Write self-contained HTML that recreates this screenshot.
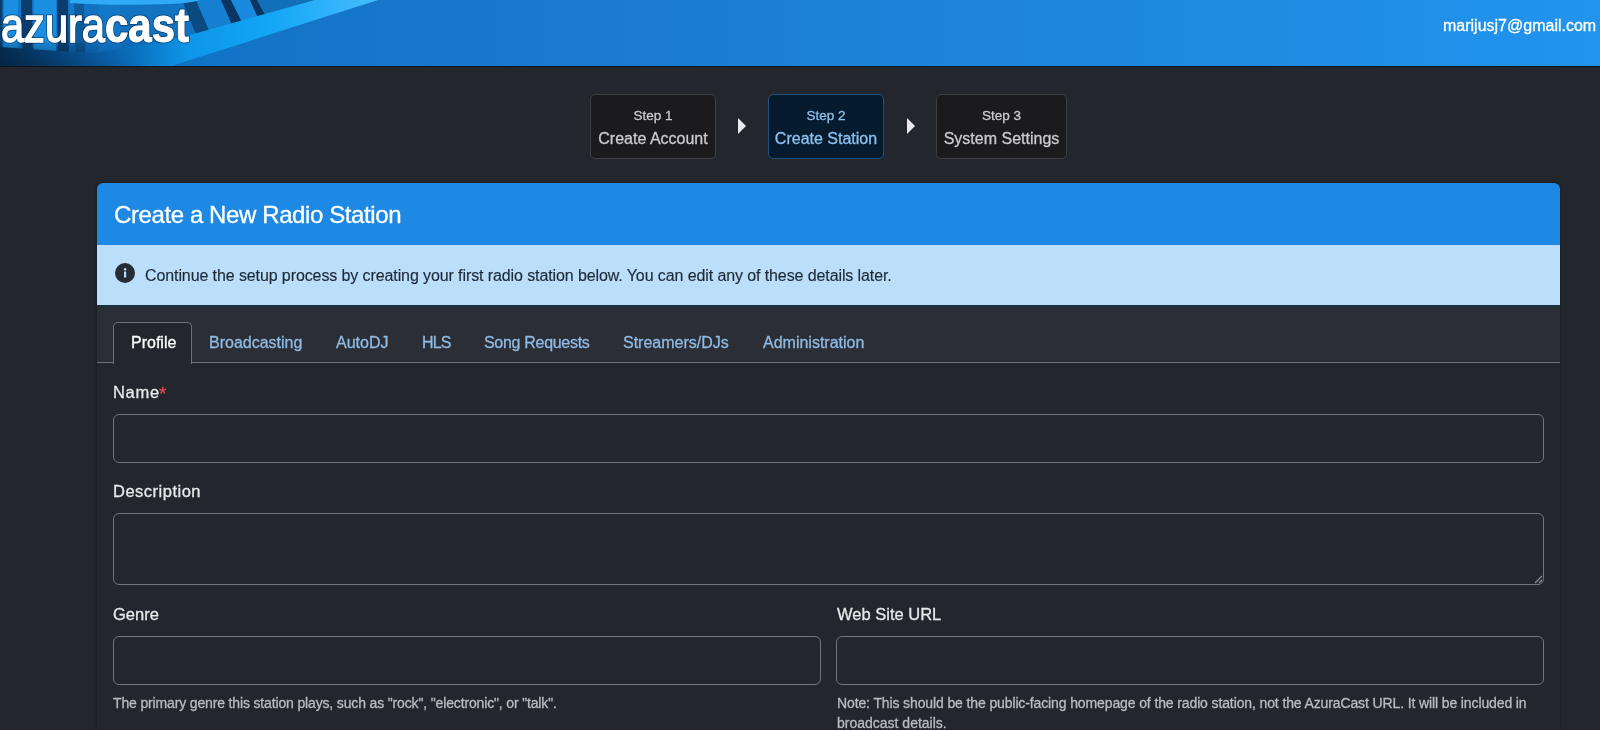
<!DOCTYPE html>
<html><head><meta charset="utf-8">
<style>
*{box-sizing:border-box;margin:0;padding:0}
html,body{width:1600px;height:730px;overflow:hidden;background:#24262e;font-family:"Liberation Sans",sans-serif}
.a{-webkit-text-stroke-width:0.3px;will-change:transform}
.a{position:absolute;white-space:pre;line-height:1}
#hdr{position:absolute;left:0;top:0;width:1600px;height:67px;overflow:hidden}
.step{position:absolute;top:94px;height:65px;border:1px solid #3c3e44;border-radius:5px;background:#1b1b1d}
.step.on{background:#071b2e;border-color:#1e4f7e}
.arrow{position:absolute;top:118px;width:0;height:0;border-top:8px solid transparent;border-bottom:8px solid transparent;border-left:8px solid #e8e8ee}
#card{position:absolute;left:97px;top:183px;width:1463px;height:600px;background:#23262d;border-radius:6px;overflow:hidden;box-shadow:0 0 3px 1px rgba(0,0,0,.22)}
.inp{position:absolute;border:1px solid #70747b;border-radius:6px;background:#23262d}
.lbl{color:#e8e9eb;font-size:16.5px}
.help{color:#b9bcc1;font-size:14px;letter-spacing:-0.15px}
.tab{color:#8fbbe6;font-size:16px}
</style></head><body>
<div id="hdr">
<svg width="1600" height="67" viewBox="0 0 1600 67">
<defs>
<linearGradient id="g1" x1="0" y1="0" x2="1600" y2="0" gradientUnits="userSpaceOnUse">
<stop offset="0" stop-color="#0a58a0"/><stop offset="0.13" stop-color="#1274c6"/><stop offset="0.3" stop-color="#1a78cc"/><stop offset="1" stop-color="#2194ee"/>
</linearGradient>
<linearGradient id="band" x1="0" y1="0" x2="378" y2="0" gradientUnits="userSpaceOnUse">
<stop offset="0" stop-color="#052a4c"/><stop offset="0.25" stop-color="#0a5ea8"/><stop offset="0.4" stop-color="#0b7ccc"/><stop offset="0.5" stop-color="#0e96e8"/><stop offset="0.71" stop-color="#12a6f5"/><stop offset="1" stop-color="#48bdff"/>
</linearGradient>
<linearGradient id="dk" x1="0" y1="40" x2="0" y2="67" gradientUnits="userSpaceOnUse">
<stop offset="0" stop-color="#05294c" stop-opacity="0"/><stop offset="1" stop-color="#04223f" stop-opacity="0.6"/>
</linearGradient>
<linearGradient id="dkx" x1="0" y1="0" x2="150" y2="0" gradientUnits="userSpaceOnUse">
<stop offset="0" stop-color="#fff" stop-opacity="1"/><stop offset="1" stop-color="#fff" stop-opacity="0"/>
</linearGradient>
<mask id="mk"><rect width="400" height="67" fill="url(#dkx)"/></mask>
</defs>
<rect width="1600" height="67" fill="url(#g1)"/>
<polygon points="0,0 315,0 188,35.5 0,50" fill="#1478c8"/>
<g fill="#0b3d6c">
<polygon points="0,0 2.5,0 2.5,60 0,60"/>
<polygon points="21,0 32,0 33,60 22,60"/>
<polygon points="57,0 68,0 69,60 58,60"/>
<polygon points="74,0 84,0 86,60 76,60" opacity="0.5"/>
</g>
<g fill="#1a8ee0">
<polygon points="4,0 18,0 18,60 4,60"/>
<polygon points="34,0 56,0 56,60 34,60"/>
<polygon points="98,0 120,0 121,60 98,60" opacity="0.5"/>
</g>
<polygon points="182,0 196,0 212,37 198,40" fill="#0a4a80"/>
<polygon points="196,0 221,0 233,27 212,37" fill="#1680d0"/>
<polygon points="221,0 231,0 243,24 233,27" fill="#0a3560"/>
<polygon points="231,0 250,0 258,18 243,24" fill="#1a8ae0"/>
<polygon points="250,0 257,0 266,16 258,18" fill="#0a3560"/>
<polygon points="257,0 315,0 266,16" fill="#1070b8"/>
<polygon points="85,0 182,0 198,40 120,56 85,60" fill="#1070c0" opacity="0.6"/>
<rect x="0" y="40" width="200" height="27" fill="url(#dk)" mask="url(#mk)"/>
<path d="M70,0 L200,0 Q190,4 150,4.5 Q105,5.5 70,3 Z" fill="#2eaaf6"/>
<path d="M315,0 L378,0 L168,67 L0,67 L0,47 Q40,50 95,53 L188,35.5 Z" fill="url(#band)"/>
<rect x="0" y="40" width="200" height="27" fill="url(#dk)" mask="url(#mk)"/>
<rect x="0" y="66" width="1600" height="1" fill="#0b1622"/>
</svg>
<svg class="a" style="left:0;top:0" width="200" height="60">
<g stroke="#05284a" stroke-opacity="0.55" fill="#05284a" fill-opacity="0.55">
<text x="1" y="41.6" font-family="Liberation Sans" font-size="49" stroke-width="3.6" textLength="104" lengthAdjust="spacingAndGlyphs">azura</text>
<text x="105" y="41.6" font-family="Liberation Sans" font-weight="bold" font-size="49" stroke-width="3.2" textLength="84" lengthAdjust="spacingAndGlyphs">cast</text>
</g>
<text x="1" y="41.6" font-family="Liberation Sans" font-size="49" fill="#fff" stroke="#fff" stroke-width="1.5" textLength="104" lengthAdjust="spacingAndGlyphs">azura</text>
<text x="105" y="41.6" font-family="Liberation Sans" font-weight="bold" font-size="49" fill="#fff" stroke="#fff" stroke-width="1.1" textLength="84" lengthAdjust="spacingAndGlyphs">cast</text>
</svg>
<div class="a" style="right:4px;top:18px;font-size:16px;color:#fff">marijusj7@gmail.com</div>
</div>

<div class="step" style="left:590px;width:126px"></div>
<div class="a" style="left:590px;width:126px;text-align:center;top:109px;font-size:13.5px;color:#cbcbcd">Step 1</div>
<div class="a" style="left:590px;width:126px;text-align:center;top:131px;font-size:16px;color:#cbcbcd">Create Account</div>
<div class="arrow" style="left:738px"></div>
<div class="step on" style="left:768px;width:116px"></div>
<div class="a" style="left:768px;width:116px;text-align:center;top:109px;font-size:13.5px;color:#8cc0ee">Step 2</div>
<div class="a" style="left:768px;width:116px;text-align:center;top:131px;font-size:16px;color:#8cc0ee">Create Station</div>
<div class="arrow" style="left:907px"></div>
<div class="step" style="left:936px;width:131px"></div>
<div class="a" style="left:936px;width:131px;text-align:center;top:109px;font-size:13.5px;color:#cbcbcd">Step 3</div>
<div class="a" style="left:936px;width:131px;text-align:center;top:131px;font-size:16px;color:#cbcbcd">System Settings</div>

<div id="card">
  <div style="position:absolute;left:0;top:0;width:1463px;height:62px;background:#1e88e5"></div>
  <div class="a" style="left:17px;top:20px;font-size:24px;letter-spacing:-0.4px;color:#fff">Create a New Radio Station</div>
  <div style="position:absolute;left:0;top:62px;width:1463px;height:63px;background:#bbdefb;border-bottom:3px solid #1c313a"></div>
  <div class="a" style="left:48px;top:85px;font-size:16px;letter-spacing:-0.1px;color:#1d2a34;-webkit-text-stroke-width:0.15px">Continue the setup process by creating your first radio station below. You can edit any of these details later.</div>
  <div style="position:absolute;left:0;top:125px;width:1463px;height:55px;background:#2b2e34;border-bottom:1px solid #6c7178"></div>
</div>
<div style="position:absolute;left:113px;top:322px;width:79px;height:42px;border:1px solid #6c7178;border-bottom:none;border-radius:5px 5px 0 0;background:#23262d"></div>
<svg class="a" style="left:115px;top:263px" width="20" height="20" viewBox="0 0 20 20"><circle cx="10" cy="10" r="10" fill="#252c33"/><rect x="9" y="8.5" width="2.2" height="6" fill="#bbdefb"/><circle cx="10.1" cy="6.2" r="1.2" fill="#bbdefb"/></svg>
<div class="a tab" style="left:130.5px;top:335px;color:#fff">Profile</div>
<div class="a tab" style="left:209.4px;top:335px">Broadcasting</div>
<div class="a tab" style="left:336px;top:335px">AutoDJ</div>
<div class="a tab" style="left:421.6px;top:335px;letter-spacing:-0.8px">HLS</div>
<div class="a tab" style="left:484px;top:335px;letter-spacing:-0.3px">Song Requests</div>
<div class="a tab" style="left:623px;top:335px">Streamers/DJs</div>
<div class="a tab" style="left:763px;top:335px">Administration</div>

<div class="a lbl" style="left:113px;top:384px;letter-spacing:0.7px">Name</div><div class="a" style="left:159px;top:384px;color:#e0474c;font-size:19px">*</div>
<div class="inp" style="left:113px;top:414px;width:1431px;height:49px"></div>
<div class="a lbl" style="left:113px;top:483px;letter-spacing:0.5px">Description</div>
<div class="inp" style="left:113px;top:513px;width:1431px;height:72px"></div>
<svg class="a" style="left:1531px;top:572px" width="12" height="12" viewBox="0 0 12 12"><path d="M4,11 L11,4 M8,11 L11,8" stroke="#8a8e95" stroke-width="1.2" fill="none"/></svg>
<div class="a lbl" style="left:113px;top:606px">Genre</div>
<div class="inp" style="left:113px;top:636px;width:708px;height:49px"></div>
<div class="a lbl" style="left:837px;top:606px">Web Site URL</div>
<div class="inp" style="left:836px;top:636px;width:708px;height:49px"></div>
<div class="a help" style="left:113px;top:696px">The primary genre this station plays, such as "rock", "electronic", or "talk".</div>
<div class="a help" style="left:837px;top:696px;letter-spacing:-0.12px">Note: This should be the public-facing homepage of the radio station, not the AzuraCast URL. It will be included in</div>
<div class="a help" style="left:837px;top:716px;letter-spacing:0">broadcast details.</div>
</body></html>
